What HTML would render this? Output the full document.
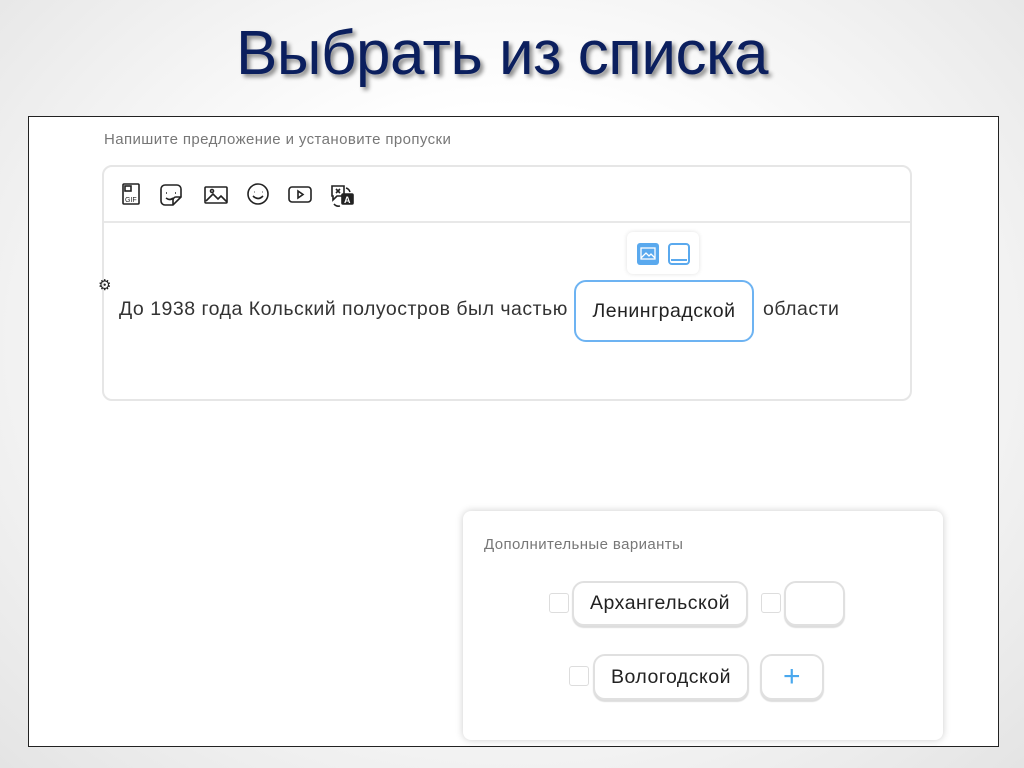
<!DOCTYPE html>
<html><head><meta charset="utf-8"><style>
*{margin:0;padding:0;box-sizing:border-box}
body{width:1024px;height:768px;overflow:hidden;position:relative;background:radial-gradient(ellipse at 50% 45%,#ffffff 40%,#e4e4e4 100%);font-family:"Liberation Sans",sans-serif}
.title{position:absolute;left:-10px;width:1024px;top:18px;text-align:center;font-family:"Liberation Sans Narrow","Liberation Sans",sans-serif;font-size:62px;color:#0b1f5e;text-shadow:3px 3px 4px rgba(0,0,0,.45);letter-spacing:-0.5px}
.panel{position:absolute;left:28px;top:116px;width:971px;height:631px;background:#fff;border:1.5px solid #222}
.lbl{position:absolute;font-size:15px;color:#777;letter-spacing:0.4px}
.card{position:absolute;left:102px;top:165px;width:810px;height:236px;border:2px solid #e6e6e6;border-radius:10px}
.sep{position:absolute;left:0;right:0;top:54px;border-top:2px solid #e8e8e8}
.txt{position:absolute;font-size:19.5px;color:#333;letter-spacing:0.5px}
.chip{position:absolute;border:2px solid #e0e0e0;border-radius:12px;background:#fff;font-size:19.5px;letter-spacing:0.5px;color:#222;display:flex;align-items:center;justify-content:center;box-shadow:0 2px 1px #ddd}
.cb{position:absolute;width:20px;height:20px;border:1.5px solid #ddd;border-radius:3px}
.box2{position:absolute;left:463px;top:511px;width:480px;height:229px;background:#fff;border-radius:8px;box-shadow:0 0 8px rgba(0,0,0,.2)}
</style></head><body>
<div class="title">Выбрать из списка</div>
<div class="panel"></div>
<div class="lbl" style="left:104px;top:131px">Напишите предложение и установите пропуски</div>
<div class="card"><div class="sep"></div></div>
<svg style="position:absolute;left:120px;top:182px" width="245" height="26" viewBox="0 0 245 26" fill="none" stroke="#222" stroke-width="1.6">
<rect x="3" y="2" width="16" height="20" rx="1"/><text x="5" y="20" font-size="7" fill="#222" stroke="none" font-family="Liberation Sans">GIF</text><rect x="5" y="4" width="6" height="5"/>
<path d="M45 3h12a4 4 0 0 1 4 4v8l-8 8h-8a4 4 0 0 1-4-4V7a4 4 0 0 1 4-4zM53 23v-5a3 3 0 0 1 3-3h5M46 11h1M55 11h1M46 16q4 3 7 0"/>
<rect x="85" y="5" width="22" height="16" rx="1"/><path d="M86 19l7-7 5 5 3-3 6 6"/><circle cx="92" cy="9" r="1.5"/>
<circle cx="138" cy="12" r="10"/><path d="M134 10h.5M142 10h.5M133 14q5 5 10 0"/>
<rect x="169" y="5" width="22" height="15" rx="3"/><path d="M178 9v7l5-3.5z"/>
<path d="M212 4h12v10h-7l-4 4v-4h-1zM216 7l4 4M220 7l-4 4M226 6a6 6 0 0 1 4 4M214 22a6 6 0 0 0 6 2"/><rect x="222" y="12" width="11" height="10" rx="1" fill="#222"/><text x="224" y="21" font-size="9" fill="#fff" stroke="none" font-family="Liberation Sans" font-weight="bold">A</text>
</svg>
<div style="position:absolute;left:98px;top:276px;font-size:15px;color:#222">⚙</div>
<div class="txt" style="left:119px;top:298px">До 1938 года Кольский полуостров был частью</div>
<div style="position:absolute;left:627px;top:232px;width:72px;height:42px;background:#fff;border-radius:6px;box-shadow:0 0 5px rgba(0,0,0,.12)"></div>
<div style="position:absolute;left:637px;top:243px;width:22px;height:22px;background:#5aa9ee;border-radius:3px"></div>
<svg style="position:absolute;left:640px;top:247px" width="16" height="14" fill="none" stroke="#fff" stroke-width="1.3"><rect x="1" y="1" width="14" height="11"/><path d="M1 11l5-5 3 3 2-2 4 4"/></svg>
<div style="position:absolute;left:668px;top:243px;width:22px;height:22px;border:2px solid #5aa9ee;border-radius:4px"></div>
<div style="position:absolute;left:671px;top:259px;width:16px;border-top:2px solid #5aa9ee"></div>
<div class="chip" style="left:574px;top:280px;width:180px;height:62px;border-color:#6db3f2;box-shadow:none">Ленинградской</div>
<div class="txt" style="left:763px;top:298px">области</div>
<div class="box2"></div>
<div class="lbl" style="left:484px;top:536px">Дополнительные варианты</div>
<div class="cb" style="left:549px;top:593px"></div>
<div class="chip" style="left:572px;top:581px;width:176px;height:45px">Архангельской</div>
<div class="cb" style="left:761px;top:593px"></div>
<div class="chip" style="left:784px;top:581px;width:61px;height:45px"></div>
<div class="cb" style="left:569px;top:666px"></div>
<div class="chip" style="left:593px;top:654px;width:156px;height:46px">Вологодской</div>
<div class="chip" style="left:760px;top:654px;width:64px;height:46px;color:#4aa8ee;font-size:30px;font-weight:300">+</div>
</body></html>
